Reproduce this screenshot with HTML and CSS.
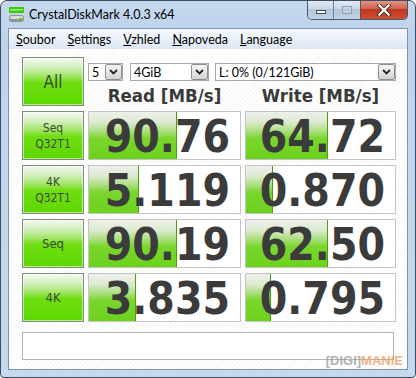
FILE: index.html
```html
<!DOCTYPE html>
<html>
<head>
<meta charset="utf-8">
<link rel="stylesheet" href="styles.css">
</head>
<body>
<div class="window">
  <div class="titlebar">
    <svg class="app-icon" width="17" height="17" viewBox="0 0 17 17">
      <rect x="1" y="1" width="15" height="6" rx="1" fill="#3cc800"/>
      <rect x="2" y="3" width="13" height="1.5" fill="#9ef07a"/>
      <rect x="1" y="9" width="15" height="7" rx="3" fill="#8e9498"/>
      <rect x="2" y="10" width="13" height="3" rx="1.5" fill="#d6dadc"/>
      <rect x="11" y="12" width="3" height="2" fill="#44dd00"/>
    </svg>
    <span class="title">CrystalDiskMark 4.0.3 x64</span>
    <div class="caption">
      <div class="cap cap-min"><svg width="12" height="6" viewBox="0 0 12 6"><rect x="1.5" y="1.5" width="9" height="3" fill="#fff" stroke="#3a4a5c"/></svg></div>
      <div class="cap cap-max"><svg width="12" height="10" viewBox="0 0 12 10"><rect x="1.5" y="1.5" width="9" height="7" fill="none" stroke="#8fa3b8"/><rect x="3" y="3.5" width="6" height="3" fill="none" stroke="#c8d4e0"/></svg></div>
      <div class="cap cap-close"><svg width="14" height="12" viewBox="0 0 14 12"><path d="M2 1 L12 11 M12 1 L2 11" stroke="#4a2a24" stroke-width="4" stroke-linecap="round"/><path d="M2.2 1.2 L11.8 10.8 M11.8 1.2 L2.2 10.8" stroke="#fff" stroke-width="2.2" stroke-linecap="round"/></svg></div>
    </div>
  </div>
  <div class="frame">
    <div class="menubar">
      <span class="mi"><u>S</u>oubor</span>
      <span class="mi"><u>S</u>ettings</span>
      <span class="mi"><u>V</u>zhled</span>
      <span class="mi"><u>N</u>apoveda</span>
      <span class="mi"><u>L</u>anguage</span>
    </div>
    <div class="client">
      <div class="grid">
        <div class="btn btn-all">All</div>
        <div class="top">
          <div class="selects">
            <div class="select s1"><span>5</span><i class="arrow"><svg width="9" height="6" viewBox="0 0 9 6"><path d="M1 1 L4.5 4.5 L8 1" fill="none" stroke="#222" stroke-width="1.8"/></svg></i></div>
            <div class="select s2"><span>4GiB</span><i class="arrow"><svg width="9" height="6" viewBox="0 0 9 6"><path d="M1 1 L4.5 4.5 L8 1" fill="none" stroke="#222" stroke-width="1.8"/></svg></i></div>
            <div class="select s3"><span>L: 0% (0/121GiB)</span><i class="arrow"><svg width="9" height="6" viewBox="0 0 9 6"><path d="M1 1 L4.5 4.5 L8 1" fill="none" stroke="#222" stroke-width="1.8"/></svg></i></div>
          </div>
          <div class="heads"><div>Read [MB/s]</div><div>Write [MB/s]</div></div>
        </div>

        <div class="btn btn-small">Seq<br>Q32T1</div>
        <div class="meter"><div class="fill" style="width:58%"></div><span class="val">90.76</span></div>
        <div class="meter"><div class="fill" style="width:55%"></div><span class="val">64.72</span></div>

        <div class="btn btn-small">4K<br>Q32T1</div>
        <div class="meter"><div class="fill" style="width:33%"></div><span class="val">5.119</span></div>
        <div class="meter"><div class="fill" style="width:18%"></div><span class="val">0.870</span></div>

        <div class="btn btn-mid">Seq</div>
        <div class="meter"><div class="fill" style="width:58%"></div><span class="val">90.19</span></div>
        <div class="meter"><div class="fill" style="width:55%"></div><span class="val">62.50</span></div>

        <div class="btn btn-mid">4K</div>
        <div class="meter"><div class="fill" style="width:31%"></div><span class="val">3.835</span></div>
        <div class="meter"><div class="fill" style="width:17%"></div><span class="val">0.795</span></div>
      </div>
      <div class="comment"></div>
      <div class="watermark"><span class="wm-digi">[DIGI]</span><span class="wm-manie">MANIE</span></div>
    </div>
  </div>
</div>
</body>
</html>
```

FILE: styles.css
```css
* { box-sizing: border-box; }
html, body { margin: 0; padding: 0; }
body {
  width: 416px;
  height: 378px;
  background: #ffffff;
  overflow: hidden;
}
.window {
  width: 416px;
  height: 378px;
  border: 1px solid #3e4d5e;
  border-radius: 7px 7px 4px 4px;
  background: linear-gradient(180deg, #c3d7ee 0%, #bed4ec 10%, #c5d9ef 100%);
  display: flex;
  flex-direction: column;
  position: relative;
  overflow: hidden;
}
.titlebar {
  height: 28px;
  display: flex;
  align-items: flex-start;
  position: relative;
  font-family: Lato, "Noto Sans", sans-serif;
}
.app-icon {
  margin: 5px 0 0 7px;
  flex: none;
}
.title {
  margin: 6px 0 0 4px;
  font-size: 12.5px;
  color: #000;
}
.caption {
  position: absolute;
  top: -1px;
  right: 7px;
  display: flex;
  height: 20px;
  border: 1px solid #4a5a6e;
  border-top: none;
  border-radius: 0 0 5px 5px;
  overflow: hidden;
}
.cap {
  height: 19px;
  display: flex;
  align-items: center;
  justify-content: center;
}
.cap-min {
  width: 26px;
  border-right: 1px solid #6b7c90;
  background: linear-gradient(180deg, #e4ecf5 0%, #cad8e8 45%, #b4c6dc 50%, #c0d2e6 100%);
}
.cap-min svg { margin-top: 5px; }
.cap-max {
  width: 27px;
  border-right: 1px solid #6b5050;
  background: linear-gradient(180deg, #e4ecf5 0%, #cad8e8 45%, #b4c6dc 50%, #c0d2e6 100%);
}
.cap-close {
  width: 46px;
  background: linear-gradient(180deg, #e49c88 0%, #d06450 45%, #c0341c 50%, #cc5034 100%);
}
.frame {
  flex: 1;
  margin: 0 7px 7px 7px;
  border: 1px solid #7f93ad;
  display: flex;
  flex-direction: column;
  background: #fff;
}
.menubar {
  height: 20px;
  flex: none;
  display: flex;
  align-items: center;
  padding-left: 7px;
  gap: 12px;
  background: linear-gradient(180deg, #f6f9fd 0%, #e9f0f8 50%, #dde7f3 100%);
  font-family: Lato, "Noto Sans", sans-serif;
  font-size: 12.5px;
  color: #000;
}
.mi u { text-decoration: underline; text-underline-offset: 1px; }
.client {
  flex: 1;
  position: relative;
  padding: 8px 13px 9px 13px;
  background: repeating-linear-gradient(135deg, #ffffff 0px, #ffffff 2px, #f6f6f6 2px, #f6f6f6 3px);
  display: flex;
  flex-direction: column;
}
.grid {
  display: grid;
  grid-template-columns: 62px 153px 151px;
  grid-auto-rows: 49px;
  column-gap: 4px;
  row-gap: 5px;
}
.btn {
  border: 1px solid #7e8c7e;
  background: linear-gradient(180deg, #f2f8ee 0%, #d6f0c4 18%, #a4e66a 38%, #6ede10 52%, #5ed800 100%);
  box-shadow: inset 0 0 0 1px rgba(255,255,255,0.55);
  display: flex;
  align-items: center;
  justify-content: center;
  text-align: center;
  color: #3c4a36;
  font-family: "DejaVu Sans Condensed", "DejaVu Sans", sans-serif;
}
.btn-all { font-size: 17px; }
.btn-small { font-size: 12px; line-height: 16px; }
.btn-mid { font-size: 13px; }
.top {
  grid-column: 2 / 4;
  display: flex;
  flex-direction: column;
}
.selects {
  margin-top: 6px;
  display: flex;
  height: 18px;
}
.select {
  height: 18px;
  border: 1px solid #a3a6ad;
  background: #fff;
  display: flex;
  align-items: center;
  justify-content: space-between;
  padding-left: 3px;
  font-family: Lato, "Noto Sans", sans-serif;
  font-size: 12.5px;
  color: #000;
}
.s1 { width: 35px; margin-right: 7px; }
.s2 { width: 79px; margin-right: 6px; }
.s3 { width: 181px; }
.arrow {
  width: 17px;
  height: 16px;
  border: 1px solid #8c8e91;
  border-radius: 2px;
  background: linear-gradient(180deg, #f4f4f4 0%, #e6e6e6 50%, #d2d2d2 100%);
  display: flex;
  align-items: center;
  justify-content: center;
}
.heads {
  flex: 1;
  display: grid;
  grid-template-columns: 153px 151px;
  column-gap: 4px;
  align-items: center;
  padding-top: 3px;
  font-family: "DejaVu Sans Condensed", "DejaVu Sans", sans-serif;
  font-weight: bold;
  font-size: 18.5px;
  color: #3a3a3a;
  text-align: center;
}
.meter {
  position: relative;
  border: 1px solid #c4c4c4;
  background: #fff;
  display: flex;
  align-items: center;
  justify-content: flex-end;
  padding-right: 10px;
}
.fill {
  position: absolute;
  left: 0;
  top: 0;
  bottom: 0;
  background: linear-gradient(180deg, #eef0ec 0%, #dceacf 22%, #a8de78 42%, #7ad62e 56%, #6cd21c 100%);
  border-right: 1px solid #48a010;
}
.val {
  position: relative;
  font-family: "DejaVu Sans Condensed", "DejaVu Sans", sans-serif;
  font-weight: bold;
  font-size: 44px;
  line-height: 44px;
  color: #3b3b3b;
  margin-top: 3px;
}
.comment {
  margin-top: 10px;
  height: 28px;
  border: 1px solid #b4b4b4;
  background: #fff;
}
.watermark {
  position: absolute;
  right: 4px;
  bottom: 1px;
  font-family: "Liberation Sans", Arial, sans-serif;
  font-weight: bold;
  font-size: 13px;
  opacity: 0.75;
}
.wm-digi { color: #9a9a9a; }
.wm-manie { color: #f09a5a; }
```
